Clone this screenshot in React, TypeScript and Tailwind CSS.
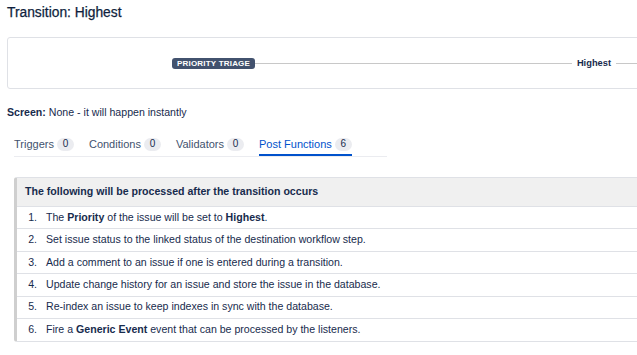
import React from "react";

const font = { fontFamily: '"Liberation Sans", Arial, sans-serif' };

function Tab({ label, count, active }: { label: string; count: number; active?: boolean }) {
  return (
    <div
      className={
        "flex items-center gap-[3px] pb-[3px] border-b-2 " +
        (active ? "border-[#0052cc] text-[#0052cc]" : "border-transparent text-[#42526e]")
      }
    >
      <span className="text-[11px] leading-[14px]">{label}</span>
      <span className="flex h-[13px] min-w-[17px] items-center justify-center rounded-full bg-[#ebecf0] px-[5px] text-[10px] leading-none text-[#172b4d]">
        {count}
      </span>
    </div>
  );
}

const rows: React.ReactNode[] = [
  <>
    The <b>Priority</b> of the issue will be set to <b>Highest</b>.
  </>,
  <>Set issue status to the linked status of the destination workflow step.</>,
  <>Add a comment to an issue if one is entered during a transition.</>,
  <>Update change history for an issue and store the issue in the database.</>,
  <>Re-index an issue to keep indexes in sync with the database.</>,
  <>
    Fire a <b>Generic Event</b> event that can be processed by the listeners.
  </>,
];

export default function App() {
  return (
    <div className="h-[355px] w-[637px] overflow-hidden bg-white text-[#172b4d]" style={font}>
      <div className="pl-[7px] pt-[3px]">
        <h1 className="text-[13.8px] leading-[20px] font-medium text-[#0f1f3d] [-webkit-text-stroke:0.25px_#0f1f3d]">
          Transition: Highest
        </h1>

        <div className="mt-[14px] flex h-[52px] w-[680px] items-center rounded-[3px] border border-[#dfe1e6] pl-[164px]">
          <span className="rounded-[3px] bg-[#42526e] px-[5px] text-[8px] leading-[11px] font-bold tracking-[0.2px] text-white">
            PRIORITY TRIAGE
          </span>
          <div className="h-px flex-1 bg-[#c8c8c8]" />
          <span className="px-[5px] text-[9.3px] leading-[12px] font-bold text-[#172b4d]">Highest</span>
          <div className="h-px w-[70px] bg-[#c8c8c8]" />
        </div>

        <p className="mt-[16px] text-[10.6px] leading-[14px]">
          <b>Screen:</b> None - it will happen instantly
        </p>

        <div className="ml-[7px] mt-[18px] flex w-[373px] gap-[15px] border-b border-[#ebecf0]">
          <Tab label="Triggers" count={0} />
          <Tab label="Conditions" count={0} />
          <Tab label="Validators" count={0} />
          <Tab label="Post Functions" count={6} active />
        </div>

        <div className="ml-[7px] mt-[20px] w-[660px] rounded-l-[3px] border-t border-b border-l-[3px] border-[#dfe1e6] border-l-[#cfcfcf]">
          <div className="flex h-[29px] items-center border-b border-[#dfe1e6] bg-[#f0f0f0] pl-[8px] text-[10.6px] font-bold">
            The following will be processed after the transition occurs
          </div>
          {rows.map((r, i) => (
            <div
              key={i}
              className={
                "flex h-[22.4px] items-center text-[10.6px] " + (i < rows.length - 1 ? "border-b border-[#dfe1e6]" : "")
              }
            >
              <span className="w-[20px] text-right">{i + 1}.</span>
              <span className="pl-[9px]">{r}</span>
            </div>
          ))}
        </div>
      </div>
    </div>
  );
}
